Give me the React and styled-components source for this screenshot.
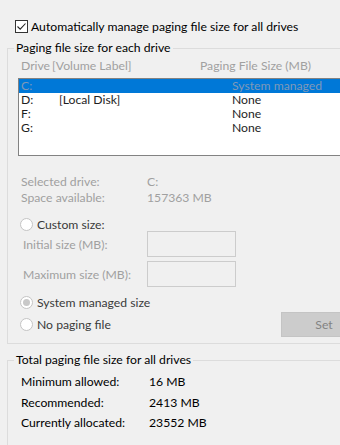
import React from "react";
import styled, { createGlobalStyle } from "styled-components";

const Global = createGlobalStyle`
  html, body {
    margin: 0;
    padding: 0;
    background: #f0f0f0;
    overflow: hidden;
  }
  body {
    font-family: Lato, "Noto Sans", sans-serif;
    font-size: 12.2px;
    color: #000;
  }
`;

const Page = styled.div`
  width: 340px;
  height: 445px;
  overflow: hidden;
  padding-top: 20px;
  box-sizing: border-box;
`;

const CheckRow = styled.label`
  display: flex;
  align-items: center;
  gap: 3px;
  height: 13px;
  margin-left: 15px;
  white-space: nowrap;
  line-height: 13px;
`;

const CheckBox = styled.span`
  width: 13px;
  height: 13px;
  box-sizing: border-box;
  border: 1px solid #333;
  background: #fff;
  display: flex;
  align-items: center;
  justify-content: center;
  flex: none;
`;

const Group = styled.fieldset`
  margin: ${(p) => p.$top}px 0 0 7px;
  padding: 0;
  width: 370px;
  min-width: 0;
  box-sizing: border-box;
  border: 1px solid #dcdcdc;
`;

const Legend = styled.legend`
  margin-left: 6px;
  padding: 0 2px;
  line-height: 14px;
  white-space: nowrap;
`;

const Content = styled.div`
  padding: ${(p) => p.$pad};
  display: flex;
  flex-direction: column;
`;

const HeaderRow = styled.div`
  display: flex;
  height: 14px;
  line-height: 14px;
  color: #a0a0a0;
  padding-left: 13px;
  white-space: nowrap;
`;

const Col = styled.span`
  width: ${(p) => p.$w}px;
  flex: none;
`;

const ListBox = styled.div`
  margin: 5px 0 0 10px;
  height: 78px;
  box-sizing: border-box;
  border: 1px solid #828282;
  background: #fff;
`;

const ListRow = styled.div`
  display: flex;
  height: 14px;
  line-height: 14px;
  padding-left: 2px;
  white-space: nowrap;
  background: ${(p) => (p.$selected ? "#0078d7" : "transparent")};
  color: ${(p) => (p.$selected ? "#7f98b8" : "#1e1e1e")};
`;

const InfoBlock = styled.div`
  margin-top: 18px;
  padding-left: 13px;
  display: flex;
  flex-direction: column;
`;

const InfoRow = styled.div`
  display: flex;
  height: 16px;
  line-height: 16px;
  color: #a0a0a0;
  white-space: nowrap;
`;

const RadioRow = styled.div`
  display: flex;
  align-items: center;
  gap: 4px;
  height: 14px;
  margin: ${(p) => p.$mt || 0}px 0 0 12px;
  color: #3a3a3a;
  white-space: nowrap;
`;

const Radio = styled.span`
  width: 13px;
  height: 13px;
  box-sizing: border-box;
  border-radius: 50%;
  border: 1px solid #c4c4c4;
  background: #fff;
  display: flex;
  align-items: center;
  justify-content: center;
  flex: none;
  &::after {
    content: "";
    width: 7px;
    height: 7px;
    border-radius: 50%;
    background: ${(p) => (p.$checked ? "#c8c8c8" : "transparent")};
  }
`;

const FieldRow = styled.div`
  display: flex;
  align-items: center;
  height: 26px;
  margin-top: ${(p) => p.$mt}px;
  padding-left: 15px;
  color: #a0a0a0;
  white-space: nowrap;
`;

const FieldLabel = styled.span`
  width: 124px;
  flex: none;
`;

const TextBox = styled.span`
  width: 89px;
  height: 26px;
  box-sizing: border-box;
  border: 1px solid #cccccc;
  background: #f0f0f0;
`;

const BottomRow = styled.div`
  display: flex;
  align-items: center;
  height: 25px;
  margin-top: 3px;
`;

const SetButton = styled.button`
  margin-left: auto;
  width: 86px;
  height: 25px;
  box-sizing: border-box;
  border: 1px solid #c4c4c4;
  background: #cccccc;
  color: #838383;
  font-family: inherit;
  font-size: 12.2px;
  padding: 0;
`;

const TotalsRow = styled.div`
  display: flex;
  height: 20.5px;
  line-height: 20.5px;
  padding-left: 13px;
  white-space: nowrap;
`;

const drives = [
  { d: "C:", label: "", size: "System managed", selected: true },
  { d: "D:", label: "[Local Disk]", size: "None" },
  { d: "F:", label: "", size: "None" },
  { d: "G:", label: "", size: "None" },
];

export default function App() {
  return (
    <>
      <Global />
      <Page>
        <CheckRow>
          <CheckBox>
            <svg width="11" height="11" viewBox="0 0 11 11">
              <path d="M1.5 5.5 L4.2 8.2 L9.5 2.5" fill="none" stroke="#222" strokeWidth="1.1" />
            </svg>
          </CheckBox>
          Automatically manage paging file size for all drives
        </CheckRow>

        <Group $top={8}>
          <Legend>Paging file size for each drive</Legend>
          <Content $pad="4px 9px 6px 0">
            <HeaderRow>
              <Col $w={31}>Drive</Col>
              <Col $w={148}>[Volume Label]</Col>
              <span>Paging File Size (MB)</span>
            </HeaderRow>
            <ListBox>
              {drives.map((r) => (
                <ListRow key={r.d} $selected={r.selected}>
                  <Col $w={38}>{r.d}</Col>
                  <Col $w={173}>{r.label}</Col>
                  <span>{r.size}</span>
                </ListRow>
              ))}
            </ListBox>
            <InfoBlock>
              <InfoRow>
                <Col $w={126}>Selected drive:</Col>
                <span>C:</span>
              </InfoRow>
              <InfoRow>
                <Col $w={126}>Space available:</Col>
                <span>157363 MB</span>
              </InfoRow>
            </InfoBlock>
            <RadioRow $mt={11}>
              <Radio />
              Custom size:
            </RadioRow>
            <FieldRow $mt={0}>
              <FieldLabel>Initial size (MB):</FieldLabel>
              <TextBox />
            </FieldRow>
            <FieldRow $mt={4}>
              <FieldLabel>Maximum size (MB):</FieldLabel>
              <TextBox />
            </FieldRow>
            <RadioRow $mt={8}>
              <Radio $checked />
              System managed size
            </RadioRow>
            <BottomRow>
              <RadioRow>
                <Radio />
                No paging file
              </RadioRow>
              <SetButton>Set</SetButton>
            </BottomRow>
          </Content>
        </Group>

        <Group $top={9}>
          <Legend>Total paging file size for all drives</Legend>
          <Content $pad="5px 0 20px 0">
            <TotalsRow>
              <Col $w={128}>Minimum allowed:</Col>
              <span>16 MB</span>
            </TotalsRow>
            <TotalsRow>
              <Col $w={128}>Recommended:</Col>
              <span>2413 MB</span>
            </TotalsRow>
            <TotalsRow>
              <Col $w={128}>Currently allocated:</Col>
              <span>23552 MB</span>
            </TotalsRow>
          </Content>
        </Group>
      </Page>
    </>
  );
}
